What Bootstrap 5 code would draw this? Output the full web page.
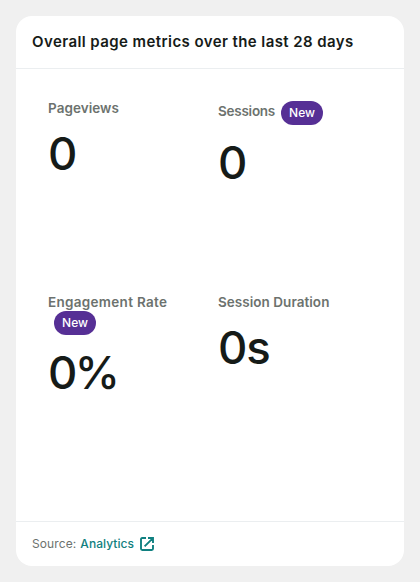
<!DOCTYPE html>
<html lang="en">
<head>
<meta charset="utf-8">
<meta name="viewport" content="width=device-width, initial-scale=1">
<title>Page metrics</title>
<link href="https://cdn.jsdelivr.net/npm/bootstrap@5.3.0/dist/css/bootstrap.min.css" rel="stylesheet">
<style>
body{background:#f0f0f0;font-family:Inter,sans-serif;color:#161b18;height:582px;overflow:hidden}
.widget{height:550px;border-radius:16px;overflow:hidden}
.widget-head{height:53px;border-bottom:1px solid #ebeef0}
.widget-title{font-size:15px;font-weight:600;line-height:20px;letter-spacing:.42px;white-space:nowrap}
.metrics{display:grid;grid-template-columns:138px 138px;column-gap:32px;grid-template-rows:194px 1fr;padding:32px 32px 0}
.metric-label{font-size:13.5px;line-height:15px;font-weight:600;color:#6c726e;letter-spacing:.04px}
.label-long{letter-spacing:.3px}
.metric-value{font-size:45.5px;line-height:52px;font-weight:450;margin-top:12px;letter-spacing:-1.2px}
.value-wide{letter-spacing:-2.6px}
.new-pill{background:#562f95;color:#fff;font-size:12px;line-height:16px;font-weight:500;letter-spacing:0;width:42px;height:24px;border-radius:12px;margin-left:6px}
.pill-below{margin-top:1px}
.label-inline .metric-name{margin-top:-3px;letter-spacing:-.25px}
.widget-foot{height:45px;border-top:1px solid #ebeef0;font-size:12px;line-height:16px;color:#6c726e;letter-spacing:.1px}
.widget-foot a{color:#108080;letter-spacing:.05px}
.widget-foot svg{margin-left:6px}
</style>
</head>
<body class="p-3">
<section class="widget bg-white d-flex flex-column">
  <header class="widget-head d-flex align-items-center px-3"><h1 class="widget-title mb-0">Overall page metrics over the last 28 days</h1></header>
  <div class="metrics flex-grow-1">
    <div><div class="metric-label">Pageviews</div><div class="metric-value">0</div></div>
    <div><div class="metric-label label-inline d-flex align-items-center"><span class="metric-name">Sessions</span><span class="new-pill d-inline-flex align-items-center justify-content-center">New</span></div><div class="metric-value">0</div></div>
    <div><div class="metric-label label-long">Engagement Rate<span class="new-pill pill-below d-flex align-items-center justify-content-center">New</span></div><div class="metric-value value-wide">0%</div></div>
    <div><div class="metric-label">Session Duration</div><div class="metric-value">0s</div></div>
  </div>
  <footer class="widget-foot d-flex align-items-center px-3">
    <span>Source:</span>
    <a href="#" class="d-flex align-items-center ms-1 text-decoration-none fw-medium"><span>Analytics</span>
      <svg width="14" height="14" viewBox="0 0 14 14" fill="none" stroke="currentColor" stroke-width="1.9" aria-hidden="true"><path d="M6 1H2.2Q1 1 1 2.2v9.6q0 1.2 1.2 1.2h9.6q1.2 0 1.2-1.2V8M8 1h5v5M12.7 1.3 4.6 9.4"/></svg>
    </a>
  </footer>
</section>
<script src="https://cdn.jsdelivr.net/npm/bootstrap@5.3.0/dist/js/bootstrap.bundle.min.js"></script>
</body>
</html>
